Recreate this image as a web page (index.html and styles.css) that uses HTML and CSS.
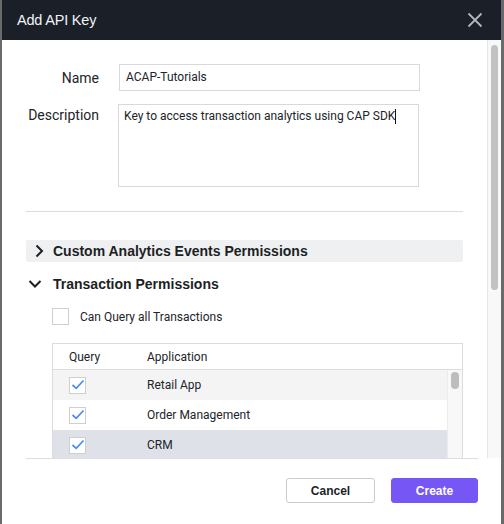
FILE: index.html
```html
<!DOCTYPE html>
<html>
<head>
<meta charset="utf-8">
<link rel="stylesheet" href="styles.css">
</head>
<body>
<div class="modal">
  <div class="modal-header">
    <span class="modal-title">Add API Key</span>
    <svg class="close" width="16" height="16" viewBox="0 0 16 16"><path d="M1.5 1.5 L14.5 14.5 M14.5 1.5 L1.5 14.5" stroke="#b4b7bc" stroke-width="1.8" fill="none"/></svg>
  </div>
  <div class="modal-body">
    <div class="content">
      <div class="form-row">
        <label class="form-label">Name</label>
        <div class="input">ACAP-Tutorials</div>
      </div>
      <div class="form-row desc-row">
        <label class="form-label desc-label">Description</label>
        <div class="textarea">Key to access transaction analytics using CAP SDK<span class="caret"></span></div>
      </div>
      <div class="divider"></div>
      <div class="section collapsed">
        <svg class="chev" width="14" height="14" viewBox="0 0 14 14"><path d="M4.5 1.5 L10 7 L4.5 12.5" stroke="#1d1f24" stroke-width="2" fill="none"/></svg>
        <span class="section-title">Custom Analytics Events Permissions</span>
      </div>
      <div class="section expanded">
        <svg class="chev" width="14" height="14" viewBox="0 0 14 14"><path d="M1.5 4 L7 9.5 L12.5 4" stroke="#1d1f24" stroke-width="2" fill="none"/></svg>
        <span class="section-title">Transaction Permissions</span>
      </div>
      <div class="check-row">
        <span class="checkbox big"></span>
        <span class="check-label">Can Query all Transactions</span>
      </div>
      <div class="table">
        <div class="thead">
          <span class="col-q">Query</span>
          <span class="col-a">Application</span>
        </div>
        <div class="tbody">
          <div class="rows">
            <div class="trow hover">
              <span class="col-q"><span class="checkbox checked"><svg width="16" height="16" viewBox="0 0 16 16"><path d="M2.5 8 L6.2 11.4 L13.5 3.5" stroke="#4a8af4" stroke-width="1.7" fill="none"/></svg></span></span>
              <span class="col-a">Retail App</span>
            </div>
            <div class="trow">
              <span class="col-q"><span class="checkbox checked"><svg width="16" height="16" viewBox="0 0 16 16"><path d="M2.5 8 L6.2 11.4 L13.5 3.5" stroke="#4a8af4" stroke-width="1.7" fill="none"/></svg></span></span>
              <span class="col-a">Order Management</span>
            </div>
            <div class="trow selected">
              <span class="col-q"><span class="checkbox checked"><svg width="16" height="16" viewBox="0 0 16 16"><path d="M2.5 8 L6.2 11.4 L13.5 3.5" stroke="#4a8af4" stroke-width="1.7" fill="none"/></svg></span></span>
              <span class="col-a">CRM</span>
            </div>
          </div>
          <div class="inner-scroll"><div class="inner-thumb"></div></div>
        </div>
      </div>
    </div>
    <div class="scrollbar"><div class="thumb"></div></div>
  </div>
  <div class="modal-footer">
    <button class="btn btn-cancel">Cancel</button>
    <button class="btn btn-create">Create</button>
  </div>
</div>
</body>
</html>
```

FILE: styles.css
```css
html, body {
  margin: 0;
  padding: 0;
}
body {
  background: #6a6a6a;
  width: 504px;
  height: 524px;
  overflow: hidden;
}
.modal {
  margin-left: 2px;
  width: 499px;
  height: 524px;
  background: #ffffff;
  display: flex;
  flex-direction: column;
}
.modal-header {
  height: 40px;
  flex: none;
  background: #1a1f28;
  display: flex;
  align-items: center;
  justify-content: space-between;
  padding: 0 18px 0 15px;
}
.modal-title {
  font-family: "Liberation Sans", Arial, sans-serif;
  font-size: 14.5px;
  color: #f2f3f5;
  letter-spacing: -0.2px;
}
.close {
  display: block;
}
.modal-body {
  height: 418px;
  flex: none;
  display: flex;
  overflow: hidden;
}
.content {
  width: 437px;
  padding: 24px 24px 0 24px;
  font-family: Roboto, "Liberation Sans", sans-serif;
  color: #222429;
}
.form-row {
  display: flex;
  align-items: center;
}
.form-label {
  width: 73px;
  text-align: right;
  font-size: 14px;
  color: #222429;
  margin-right: 20px;
}
.input {
  width: 293px;
  height: 25px;
  border: 1px solid #d9d9dc;
  padding: 0 0 0 6px;
  font-size: 12px;
  line-height: 25px;
  color: #222429;
}
.desc-row {
  margin-top: 13px;
  align-items: flex-start;
}
.desc-label {
  padding-top: 3px;
  margin-right: 19px;
}
.textarea {
  width: 294px;
  height: 75px;
  border: 1px solid #d9d9dc;
  padding: 4px 0 2px 5px;
  font-size: 12px;
  line-height: 15px;
  color: #222429;
}
.caret {
  display: inline-block;
  width: 1px;
  height: 15px;
  background: #111;
  vertical-align: top;
}
.divider {
  margin-top: 24px;
  height: 1px;
  background: #dcdcdf;
}
.section {
  height: 22px;
  display: flex;
  align-items: center;
  border-radius: 2px;
}
.section.collapsed {
  margin-top: 28px;
  background: #eff0f2;
}
.section.expanded {
  margin-top: 11px;
}
.chev {
  display: block;
  flex: none;
}
.collapsed .chev {
  margin-left: 6px;
  margin-right: 7px;
}
.expanded .chev {
  margin-left: 2px;
  margin-right: 11px;
}
.section-title {
  font-family: "Liberation Sans", Arial, sans-serif;
  font-weight: bold;
  font-size: 14px;
  color: #1d1f24;
}
.check-row {
  margin-top: 13px;
  padding-left: 26px;
  display: flex;
  align-items: center;
  height: 17px;
}
.checkbox {
  display: inline-flex;
  align-items: center;
  justify-content: center;
  box-sizing: border-box;
  width: 17px;
  height: 17px;
  border: 1px solid #cfcfd2;
  background: #fff;
}
.checkbox svg {
  display: block;
  flex: none;
}
.check-label {
  margin-left: 11px;
  font-size: 12px;
  color: #222429;
}
.table {
  margin-top: 18px;
  margin-left: 26px;
  width: 409px;
  border: 1px solid #dbdbe0;
  border-bottom: none;
  font-size: 12px;
  color: #222429;
}
.thead {
  height: 25px;
  display: flex;
  align-items: center;
  border-bottom: 1px solid #dbdbe0;
}
.col-q {
  width: 78px;
  padding-left: 16px;
  display: flex;
  align-items: center;
}
.col-a {
  flex: 1;
}
.tbody {
  display: flex;
}
.rows {
  flex: 1;
}
.trow {
  height: 30px;
  display: flex;
  align-items: center;
}
.trow.hover {
  background: #f4f4f5;
}
.trow.selected {
  background: #dfe1e8;
}
.inner-scroll {
  width: 14px;
  background: #f8f8f8;
  border-left: 1px solid #ececec;
}
.inner-thumb {
  width: 8px;
  height: 17px;
  margin: 2px 0 0 3px;
  border-radius: 4px;
  background: #bdbdbd;
}
.scrollbar {
  width: 13px;
  flex: none;
  background: #f8f8f8;
  border-left: 1px solid #e6e6e6;
}
.thumb {
  width: 7px;
  height: 245px;
  margin: 5px 0 0 3px;
  border-radius: 4px;
  background: #c2c2c2;
}
.modal-footer {
  flex: none;
  margin: 0 23px 0 24px;
  border-top: 1px solid #dcdce3;
  padding-top: 19px;
  display: flex;
  justify-content: flex-end;
  gap: 16px;
}
.btn {
  height: 25px;
  border-radius: 3px;
  font-family: "Liberation Sans", Arial, sans-serif;
  font-weight: bold;
  font-size: 12px;
  padding: 0;
  cursor: pointer;
}
.btn-cancel {
  width: 89px;
  background: #fff;
  border: 1px solid #cacacd;
  color: #1d1f24;
}
.btn-create {
  width: 87px;
  background: #7657f6;
  border: 1px solid #7657f6;
  color: #fff;
}
```
